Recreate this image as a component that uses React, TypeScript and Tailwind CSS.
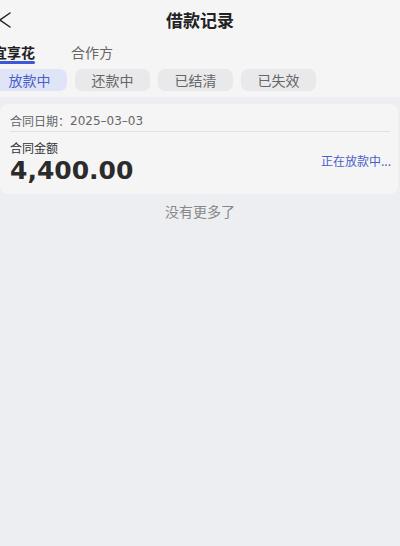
const filters = ['放款中', '还款中', '已结清', '已失效'];

export default function App() {
  return (
    <div
      className="min-h-[546px] w-[400px] overflow-hidden bg-[#edeef2]"
      style={{ fontFamily: '"Noto Sans CJK SC", "Noto Sans", sans-serif' }}
    >
      <div className="bg-[#f5f5f5] pb-[6px]">
        <div className="relative flex h-[40px] items-center justify-center">
          <svg
            className="absolute left-[-1px] top-[12px]"
            width="13"
            height="16"
            viewBox="0 0 13 16"
            fill="none"
            stroke="#222"
            strokeWidth="1.5"
            strokeLinecap="round"
            strokeLinejoin="round"
          >
            <polyline points="11,1 1,8 11,15" />
          </svg>
          <h1 className="mt-[-1px] text-[17px] font-semibold text-[#222]">借款记录</h1>
        </div>

        <div className="ml-[-7px] mt-[2px] flex h-[22px] items-start gap-[36px]">
          <div className="flex flex-col items-center">
            <span className="text-[14px] leading-[20px] font-semibold text-[#222]">宜享花</span>
            <span className="mt-[-1px] h-[3px] w-[42px] rounded-full bg-[#3d57d6]" />
          </div>
          <span className="text-[14px] leading-[20px] text-[#666]">合作方</span>
        </div>

        <div className="ml-[-8px] mt-[5px] flex gap-[8px]">
          {filters.map((f, i) => (
            <div
              key={f}
              className={
                i === 0
                  ? 'flex h-[22px] w-[75px] items-center justify-center rounded-[7px] bg-[#dfe4f7] text-[14px] text-[#4a5fc9]'
                  : 'flex h-[22px] w-[75px] items-center justify-center rounded-[7px] bg-[#e9e9eb] text-[14px] text-[#666]'
              }
            >
              {f}
            </div>
          ))}
        </div>
      </div>

      <div className="mr-[2px] mt-[7px] rounded-[8px] bg-[#f5f5f6] px-[10px] pb-[8px]">
        <div className="flex h-[27px] items-start pt-[9px] text-[12px] leading-[16px] text-[#666]">
          <span>合同日期：</span>
          <span style={{ fontFamily: '"DejaVu Sans", sans-serif' }}>2025–03–03</span>
        </div>
        <div className="mr-[-2px] h-px bg-[#e2e2e4]" />
        <div className="mt-[8px] flex items-center justify-between">
          <div className="flex flex-col">
            <span className="text-[12px] leading-[16px] text-[#333]">合同金额</span>
            <span
              className="text-[25px] leading-[30px] font-bold text-[#2b2b2b]"
              style={{ fontFamily: '"DejaVu Sans", sans-serif' }}
            >
              4,400.00
            </span>
          </div>
          <span className="mb-[4px] mr-[-3px] text-[12px] text-[#4a5fc9]">正在放款中...</span>
        </div>
      </div>

      <div className="mt-[7px] text-center text-[14px] leading-[20px] text-[#888]">没有更多了</div>
    </div>
  );
}
